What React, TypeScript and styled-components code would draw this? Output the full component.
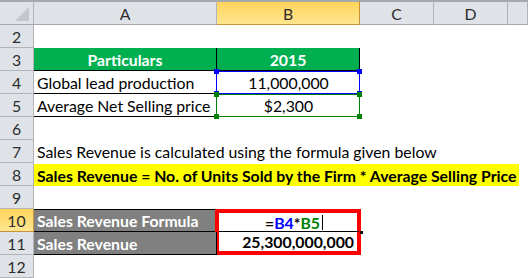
import styled, { createGlobalStyle } from "styled-components";

const GlobalStyle = createGlobalStyle`
  html, body {
    margin: 0;
    padding: 0;
    background: #ffffff;
  }
`;

const Sheet = styled.div`
  display: grid;
  grid-template-columns: 34px 183px 143px 74px 74px 1fr;
  grid-template-rows: 25px repeat(11, 23px);
  width: 528px;
  height: 278px;
  overflow: hidden;
  font-family: Lato, "Liberation Sans", sans-serif;
  font-size: 15.8px;
  color: #000;
`;

const Corner = styled.div`
  position: relative;
  background: #dfe3e8;
  border-top: 2px solid #a4a9ae;
  border-right: 1px solid #b1b5ba;
  border-bottom: 1px solid #a4a9ae;
  &::after {
    content: "";
    position: absolute;
    right: 4px;
    bottom: 3px;
    border-left: 14px solid transparent;
    border-bottom: 14px solid #c3c7cc;
  }
`;

const ColHeader = styled.div<{ $selected?: boolean }>`
  display: flex;
  align-items: center;
  justify-content: center;
  border-top: 2px solid #a4a9ae;
  border-right: 1px solid ${(p) => (p.$selected ? "#c9923a" : "#b1b5ba")};
  border-bottom: 1px solid ${(p) => (p.$selected ? "#c9923a" : "#a4a9ae")};
  background: ${(p) =>
    p.$selected ? "linear-gradient(#ffd45a, #ffe690)" : "#dfe3e8"};
  color: #2c2c2c;
  padding-top: 1px;
`;

const RowHeader = styled.div<{ $selected?: boolean }>`
  display: flex;
  align-items: center;
  justify-content: center;
  border-right: 1px solid ${(p) => (p.$selected ? "#c9923a" : "#b1b5ba")};
  border-bottom: 1px solid ${(p) => (p.$selected ? "#c9923a" : "#b1b5ba")};
  background: ${(p) =>
    p.$selected ? "linear-gradient(#ffd45a, #ffe690)" : "#dfe3e8"};
  color: #2c2c2c;
`;

const Blank = styled.div<{ $span: number }>`
  grid-column: span ${(p) => p.$span};
`;

const Cell = styled.div<{
  $fill?: string;
  $ink?: string;
  $bold?: boolean;
  $align?: "left" | "center" | "right";
  $span?: number;
  $top?: boolean;
  $right?: boolean;
  $bottom?: boolean;
}>`
  position: relative;
  display: flex;
  align-items: center;
  justify-content: ${(p) =>
    p.$align === "center" ? "center" : p.$align === "right" ? "flex-end" : "flex-start"};
  grid-column: span ${(p) => p.$span ?? 1};
  padding: 0 3px;
  background: ${(p) => p.$fill ?? "transparent"};
  color: ${(p) => p.$ink ?? "#000"};
  font-weight: ${(p) => (p.$bold ? 700 : 400)};
  white-space: nowrap;
  border-top: ${(p) => (p.$top ? "1px solid #000" : "none")};
  border-right: ${(p) => (p.$right ? "1px solid #000" : "none")};
  border-bottom: ${(p) => (p.$bottom ? "1px solid #000" : "none")};
`;

const RefBox = styled.div<{ $color: string }>`
  position: absolute;
  top: 0;
  bottom: 0;
  left: -1px;
  right: 0;
  border: 1px solid ${(p) => p.$color};
  pointer-events: none;
`;

const Handle = styled.span<{ $color: string; $x: "l" | "r"; $y: "t" | "b" }>`
  position: absolute;
  width: 5px;
  height: 5px;
  background: ${(p) => p.$color};
  ${(p) => (p.$x === "l" ? "left: -3px;" : "right: -3px;")}
  ${(p) => (p.$y === "t" ? "top: -3px;" : "bottom: -3px;")}
`;

const Highlight = styled.span`
  background: #ffff00;
  font-weight: 700;
  padding: 2px 3px 1px;
  margin-left: -3px;
`;

const RedBox = styled.div`
  grid-row: span 2;
  display: grid;
  grid-template-rows: 19px 1fr;
  margin: 0 -1px 0 -2px;
  border: 4px solid #ff0000;
  position: relative;
  &::after {
    content: "";
    position: absolute;
    right: -6px;
    top: 18px;
    width: 3px;
    height: 3px;
    background: #000;
  }
`;

const EditCell = styled.div`
  display: flex;
  align-items: center;
  justify-content: center;
  font-weight: 700;
  border-bottom: 1px solid #000;
  margin-right: -2px;
  padding-left: 10px;
`;

const Caret = styled.span`
  display: inline-block;
  width: 1px;
  height: 15px;
  background: #000;
  margin-left: 2px;
`;

const Ref = styled.span<{ $color: string }>`
  color: ${(p) => p.$color};
`;

const ResultCell = styled.div`
  display: flex;
  align-items: center;
  justify-content: flex-end;
  font-weight: 700;
  padding-right: 3px;
`;

function RefFrame({ color }: { color: string }) {
  return (
    <RefBox $color={color}>
      <Handle $color={color} $x="l" $y="t" />
      <Handle $color={color} $x="r" $y="t" />
      <Handle $color={color} $x="l" $y="b" />
      <Handle $color={color} $x="r" $y="b" />
    </RefBox>
  );
}

export default function App() {
  return (
    <>
      <GlobalStyle />
      <Sheet>
        <Corner />
        <ColHeader>A</ColHeader>
        <ColHeader $selected>B</ColHeader>
        <ColHeader>C</ColHeader>
        <ColHeader>D</ColHeader>
        <ColHeader />

        <RowHeader>2</RowHeader>
        <Blank $span={5} />

        <RowHeader>3</RowHeader>
        <Cell $fill="#00b050" $ink="#fff" $bold $align="center" $right $bottom>
          Particulars
        </Cell>
        <Cell $fill="#00b050" $ink="#fff" $bold $align="center" $right $bottom>
          2015
        </Cell>
        <Blank $span={3} />

        <RowHeader>4</RowHeader>
        <Cell $right $bottom>Global lead production</Cell>
        <Cell $align="center">
          11,000,000
          <RefFrame color="#0000ff" />
        </Cell>
        <Blank $span={3} />

        <RowHeader>5</RowHeader>
        <Cell $right $bottom>Average Net Selling price</Cell>
        <Cell $align="center">
          $2,300
          <RefFrame color="#008000" />
        </Cell>
        <Blank $span={3} />

        <RowHeader>6</RowHeader>
        <Blank $span={5} />

        <RowHeader>7</RowHeader>
        <Cell $span={5}>Sales Revenue is calculated using the formula given below</Cell>

        <RowHeader>8</RowHeader>
        <Cell $span={5}>
          <Highlight>
            Sales Revenue = No. of Units Sold by the Firm * Average Selling Price
          </Highlight>
        </Cell>

        <RowHeader>9</RowHeader>
        <Blank $span={5} />

        <RowHeader $selected>10</RowHeader>
        <Cell $fill="#808080" $ink="#fff" $bold $top $right $bottom>
          Sales Revenue Formula
        </Cell>
        <RedBox>
          <EditCell>
            =<Ref $color="#0000ff">B4</Ref>*<Ref $color="#008000">B5</Ref>
            <Caret />
          </EditCell>
          <ResultCell>25,300,000,000</ResultCell>
        </RedBox>
        <Blank $span={3} />

        <RowHeader>11</RowHeader>
        <Cell $fill="#808080" $ink="#fff" $bold $right $bottom>
          Sales Revenue
        </Cell>
        <Blank $span={3} />

        <RowHeader>12</RowHeader>
        <Blank $span={5} />
      </Sheet>
    </>
  );
}
